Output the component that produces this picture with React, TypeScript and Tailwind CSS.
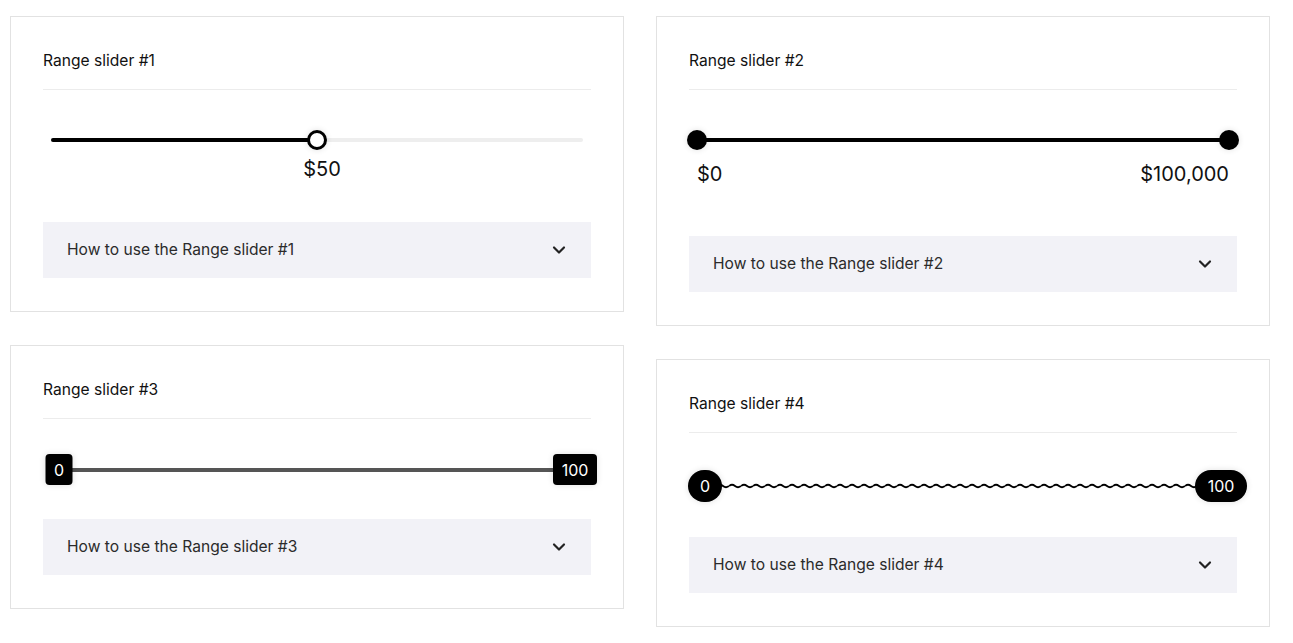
import { ChevronDown } from "lucide-react";
import type { ReactNode } from "react";

function Card({ title, children }: { title: string; children: ReactNode }) {
  return (
    <section className="w-[614px] border border-[#e2e2e2] bg-white px-8 pb-[33px] pt-8">
      <h2 className="border-b border-[#ececec] pb-4 text-[15.6px] leading-6 text-[#111]">
        {title}
      </h2>
      {children}
    </section>
  );
}

function Accordion({ n, className }: { n: number; className: string }) {
  return (
    <button
      type="button"
      className={`flex h-14 w-full items-center justify-between bg-[#f2f2f7] pl-6 pr-[22px] text-left text-[15.6px] text-[#2b2b2b] ${className}`}
    >
      How to use the Range slider #{n}
      <ChevronDown className="h-5 w-5 text-[#222]" strokeWidth={2.6} aria-hidden />
    </button>
  );
}

function Slider1() {
  return (
    <>
      <div className="relative mx-2 mt-[48px] h-1 rounded-full bg-[#eeeeee]">
        <div className="absolute left-0 top-0 h-1 w-1/2 rounded-full bg-black" />
        <div className="absolute left-1/2 top-1/2 h-5 w-5 -translate-x-1/2 -translate-y-1/2 rounded-full border-[3px] border-black bg-white shadow-[0_0_6px_rgba(0,0,0,0.12)]" />
      </div>
      <div className="mt-[13px] pl-[10px] text-center text-[20px] leading-7 text-[#111]">$50</div>
    </>
  );
}

function Slider2() {
  return (
    <>
      <div className="relative mx-2 mt-[48px] h-1 bg-black">
        <div className="absolute left-0 top-1/2 h-5 w-5 -translate-x-1/2 -translate-y-1/2 rounded-full bg-black shadow-[0_0_6px_rgba(0,0,0,0.12)]" />
        <div className="absolute right-0 top-1/2 h-5 w-5 translate-x-1/2 -translate-y-1/2 rounded-full bg-black shadow-[0_0_6px_rgba(0,0,0,0.12)]" />
      </div>
      <div className="mx-2 mt-[18px] flex justify-between text-[20px] leading-7 text-[#111]">
        <span>$0</span>
        <span>$100,000</span>
      </div>
    </>
  );
}

function Slider3() {
  return (
    <div className="relative mx-4 mt-[35px] h-[31px]">
      <div className="absolute left-0 right-0 top-1/2 h-1 -translate-y-1/2 bg-[#555]" />
      <div className="absolute left-0 top-0 flex h-[31px] w-[27px] -translate-x-1/2 items-center justify-center rounded bg-black text-[16px] text-white shadow-[0_0_6px_rgba(0,0,0,0.12)]">
        0
      </div>
      <div className="absolute right-0 top-0 flex h-[31px] w-11 translate-x-1/2 items-center justify-center rounded bg-black text-[16px] text-white shadow-[0_0_6px_rgba(0,0,0,0.12)]">
        100
      </div>
    </div>
  );
}

function Slider4() {
  return (
    <div className="relative mx-4 mt-[37px] h-8">
      <svg className="absolute left-0 right-0 top-1/2 h-2 w-full -translate-y-1/2" aria-hidden>
        <defs>
          <pattern id="wave" width="12" height="8" patternUnits="userSpaceOnUse">
            <path d="M0 4 Q3 1.6 6 4 T12 4" fill="none" stroke="#000" strokeWidth="1.8" />
          </pattern>
        </defs>
        <rect width="100%" height="8" fill="url(#wave)" />
      </svg>
      <div className="absolute left-0 top-0 flex h-8 w-[34px] -translate-x-1/2 items-center justify-center rounded-full bg-black text-[16px] text-white shadow-[0_0_6px_rgba(0,0,0,0.12)]">
        0
      </div>
      <div className="absolute right-0 top-0 flex h-8 w-[52px] translate-x-1/2 items-center justify-center rounded-full bg-black text-[16px] text-white shadow-[0_0_6px_rgba(0,0,0,0.12)]">
        100
      </div>
    </div>
  );
}

export default function App() {
  return (
    <div
      className="flex min-h-screen items-start gap-8 bg-white pl-[10px] pt-4"
      style={{ fontFamily: "Inter, 'Noto Sans', sans-serif" }}
    >
      <div className="flex flex-col gap-[33px]">
        <Card title="Range slider #1">
          <Slider1 />
          <Accordion n={1} className="mt-[39px]" />
        </Card>
        <Card title="Range slider #3">
          <Slider3 />
          <Accordion n={3} className="mt-[34px]" />
        </Card>
      </div>
      <div className="flex flex-col gap-[33px]">
        <Card title="Range slider #2">
          <Slider2 />
          <Accordion n={2} className="mt-[48px]" />
        </Card>
        <Card title="Range slider #4">
          <Slider4 />
          <Accordion n={4} className="mt-[35px]" />
        </Card>
      </div>
    </div>
  );
}
